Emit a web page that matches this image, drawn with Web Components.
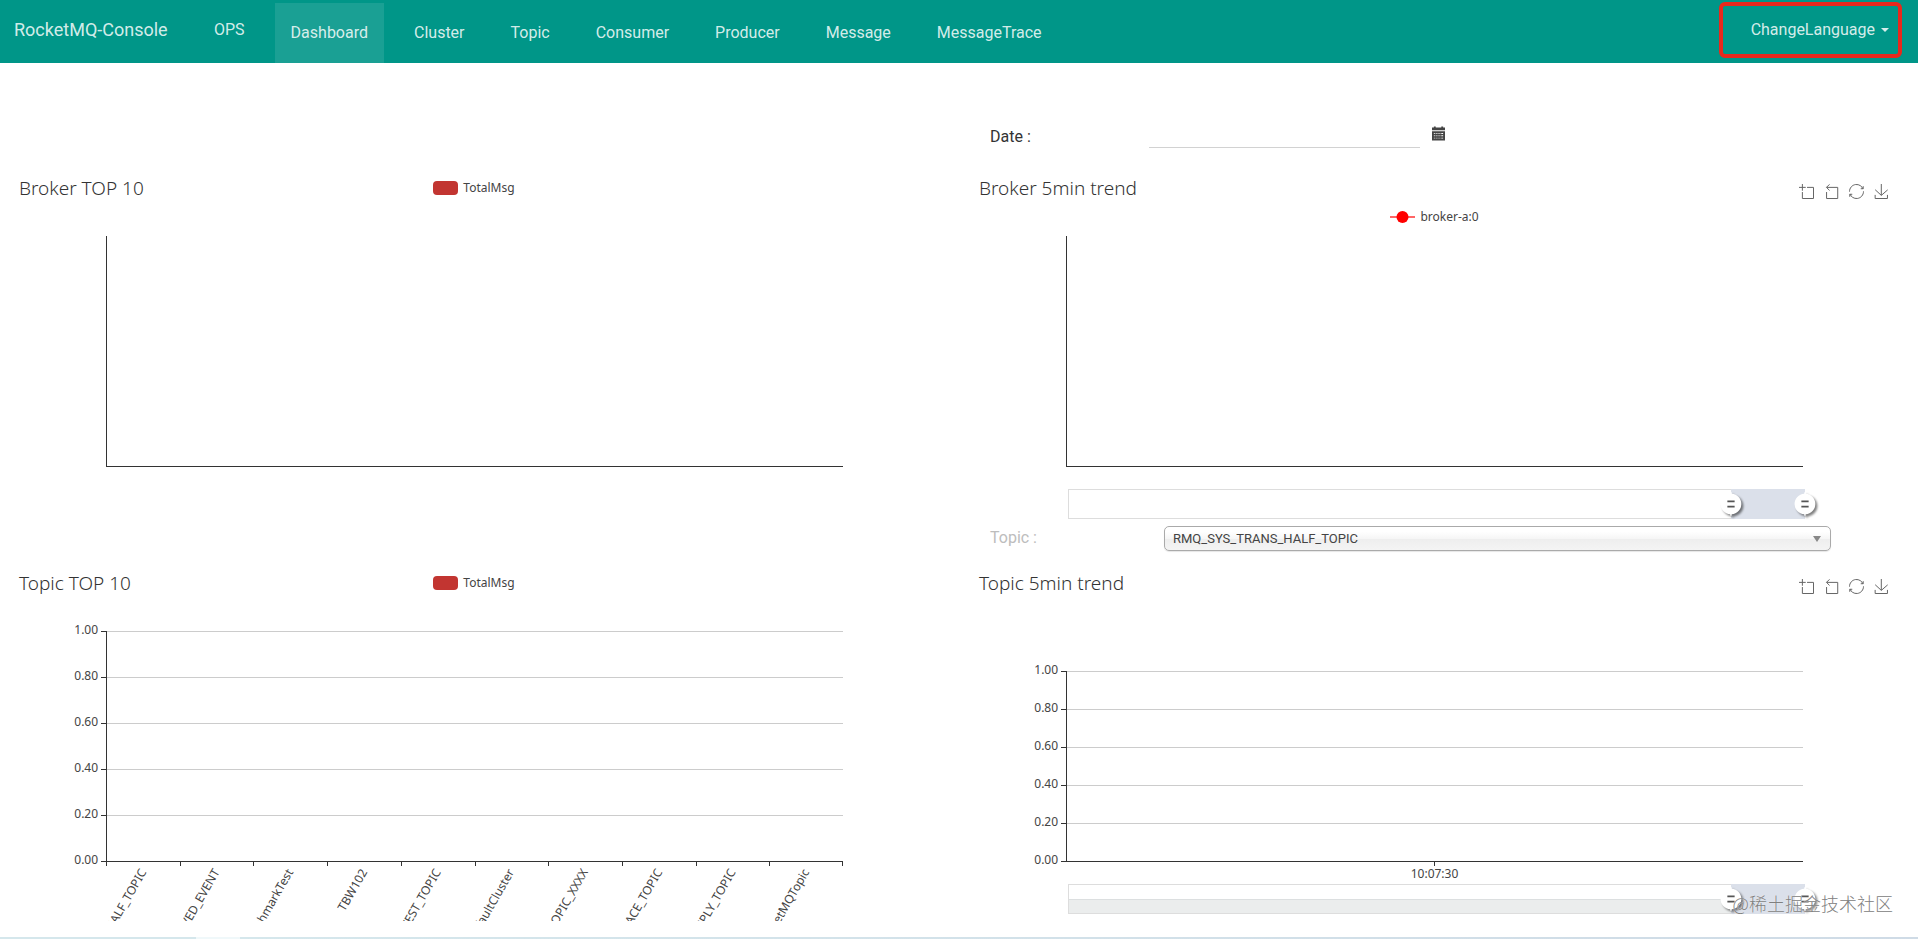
<!DOCTYPE html>
<html lang="en">
<head>
<meta charset="utf-8">
<title>RocketMQ-Console</title>
<style>
*{
    box-sizing: border-box;
}
body{
    margin: 0;
    min-height: 100vh;
    display: flex;
    flex-direction: column;
    position: relative;
    background: white;
    color: #333;
    font-family: Roboto, "Liberation Sans", sans-serif;
    font-size: 16px;
}
.board{
    display: grid;
    grid-template-columns: 1fr 1fr;
    column-gap: 2px;
}
.board > *{
    margin: 0 23px 0 14px;
}
.right{
    grid-column: 2;
}
.strip{
    margin-top: auto;
    height: 2px;
    background: linear-gradient(90deg, #d5e7ec 196px, #f0f8fa 196px 240px, #d5e7ec 240px, #cfdbe6);
}
.watermark{
    position: absolute;
    right: 25px;
    bottom: 23px;
    font: 300 18px/26px "Noto Sans CJK SC", sans-serif;
    color: #808080;
    text-shadow: 0 0 1px white;
    pointer-events: none;
}
</style>
</head>
<body>

<nav-bar brand="RocketMQ-Console">
    <nav-link slot="ops">OPS</nav-link>
    <nav-link active tab>Dashboard</nav-link>
    <nav-link tab>Cluster</nav-link>
    <nav-link tab>Topic</nav-link>
    <nav-link tab>Consumer</nav-link>
    <nav-link tab>Producer</nav-link>
    <nav-link tab>Message</nav-link>
    <nav-link tab>MessageTrace</nav-link>
</nav-bar>

<main class="board">
    <date-field class="right">Date :</date-field>

    <chart-panel heading="Broker TOP 10">
        <chart-legend slot="legend" type="bar">TotalMsg</chart-legend>
    </chart-panel>
    <chart-panel heading="Broker 5min trend" tools zoom>
        <chart-legend slot="sublegend" type="line">broker-a:0</chart-legend>
    </chart-panel>

    <topic-field class="right" options="RMQ_SYS_TRANS_HALF_TOPIC,OFFSET_MOVED_EVENT,BenchmarkTest,TBW102">Topic :</topic-field>

    <chart-panel heading="Topic TOP 10" values="1.00,0.80,0.60,0.40,0.20,0.00"
        categories="RMQ_SYS_TRANS_HALF_TOPIC,OFFSET_MOVED_EVENT,BenchmarkTest,TBW102,SELF_TEST_TOPIC,DefaultCluster,SCHEDULE_TOPIC_XXXX,RMQ_SYS_TRACE_TOPIC,DefaultCluster_REPLY_TOPIC,RocketMQTopic">
        <chart-legend slot="legend" type="bar">TotalMsg</chart-legend>
    </chart-panel>
    <chart-panel heading="Topic 5min trend" tools zoom shadow time="10:07:30" values="1.00,0.80,0.60,0.40,0.20,0.00"></chart-panel>
</main>

<div class="strip"></div>
<div class="watermark">@稀土掘金技术社区</div>

<script>
// attaches an open shadow root and fills it with the given markup
function shadowFrom(el, html){
    const template = document.createElement('template');
    template.innerHTML = html;
    const shadow = el.attachShadow({mode: 'open'});
    shadow.appendChild(template.content.cloneNode(true));
    return shadow;
}

function list(el, name){
    const value = el.getAttribute(name);
    return value ? value.split(',') : [];
}

class NavBar extends HTMLElement{
    connectedCallback(){
        shadowFrom(this, `
<style>
*{
    box-sizing: border-box;
}
:host{
    display: flex;
    align-items: flex-start;
    height: 63px;
    background: #009688;
    color: rgba(255, 255, 255, 0.84);
}
a{
    color: inherit;
    text-decoration: none;
}
.brand{
    width: 199px;
    padding-left: 14px;
    font-size: 18px;
    line-height: 59px;
}
nav{
    display: flex;
    gap: 14px;
    margin: 3px 0 0 15px;
}
button{
    display: flex;
    align-items: center;
    gap: 6px;
    height: 56px;
    margin: 2px 16px 0 auto;
    padding: 0 9px 1px 28px;
    border: 4px solid #e8281c;
    border-radius: 6px;
    background: none;
    color: inherit;
    font: inherit;
}
.caret{
    border: 4px solid transparent;
    border-top-color: currentColor;
    border-bottom: 0;
}
</style>
<a class="brand" href="#">${this.getAttribute('brand')}</a>
<slot name="ops"></slot>
<nav><slot></slot></nav>
<button type="button">ChangeLanguage <span class="caret"></span></button>
`);
    }
}

class NavLink extends HTMLElement{
    connectedCallback(){
        shadowFrom(this, `
<style>
:host{
    display: block;
}
a{
    display: block;
    padding: 0 15px;
    line-height: 59px;
    color: inherit;
    text-decoration: none;
}
:host([tab]) a{
    padding: 0 16px;
    line-height: 60px;
}
:host([active]) a{
    background: rgba(255, 255, 255, 0.1);
}
</style>
<a href="#"><slot></slot></a>
`);
    }
}

class DateField extends HTMLElement{
    connectedCallback(){
        shadowFrom(this, `
<style>
*{
    box-sizing: border-box;
}
:host{
    display: flex;
    align-items: flex-end;
    height: 85px;
    margin-bottom: 28px !important;
    padding-left: 16px;
}
label{
    width: 159px;
    line-height: 22px;
}
input{
    width: 271px;
    height: 36px;
    padding: 0;
    border: 0;
    border-bottom: 1px solid #d2d2d2;
    background: none;
    font: inherit;
}
button{
    margin: 0 0 7px 12px;
    padding: 0;
    border: 0;
    background: none;
    color: #444;
}
svg{
    display: block;
}
</style>
<label for="date"><slot></slot></label>
<input id="date" type="text">
<button type="button" aria-label="Pick a date">
    <svg width="13" height="15" viewBox="0 0 14 15" fill="currentColor">
        <path d="M0 1h2V0h2v1h6V0h2v1h2v3H0z"/>
        <path fill-rule="evenodd" d="M0 5h14v10H0zM2 7v1h1V7zM4 7v1h1V7zM6 7v1h1V7zM8 7v1h1V7zM10 7v1h2V7zM2 9.500v1h1v-1zM4 9.500v1h1v-1zM6 9.500v1h1v-1zM8 9.500v1h1v-1zM10 9.500v1h2v-1zM2 12v1h1v-1zM4 12v1h1v-1zM6 12v1h1v-1zM8 12v1h1v-1zM10 12v1h2v-1z"/>
    </svg>
</button>
`);
    }
}

class TopicField extends HTMLElement{
    connectedCallback(){
        shadowFrom(this, `
<style>
*{
    box-sizing: border-box;
}
:host{
    display: flex;
    height: 45px;
    padding: 0 64px 0 16px;
}
label{
    width: 174px;
    line-height: 23px;
    color: #bdbdbd;
}
.box{
    flex: 1;
    display: grid;
    height: 25px;
}
.box > *{
    grid-area: 1 / 1;
}
select{
    appearance: none;
    padding: 0 24px 0 8px;
    border: 1px solid #aaa;
    border-radius: 5px;
    background: linear-gradient(white 20%, #f6f6f6 50%, #eee 52%, #f4f4f4 100%);
    box-shadow: 0 1px 1px rgba(0, 0, 0, 0.1);
    color: #444;
    font: 13px/23px Roboto, sans-serif;
}
.arrow{
    place-self: center end;
    margin-right: 10px;
    border: 4px solid transparent;
    border-top: 6px solid #888;
    border-bottom: 0;
    pointer-events: none;
}
</style>
<label for="topic"><slot></slot></label>
<div class="box">
    <select id="topic">${list(this, 'options').map(o => `<option>${o}</option>`).join('')}</select>
    <span class="arrow"></span>
</div>
`);
    }
}

class ChartLegend extends HTMLElement{
    connectedCallback(){
        const bar = '<rect width="25" height="14" rx="4" fill="#c23531"/>';
        const line = '<path d="M0 7h25" stroke="#f66" stroke-width="2"/><circle cx="12.500" cy="7" r="6" fill="red"/>';
        shadowFrom(this, `
<style>
:host{
    display: flex;
    align-items: center;
    gap: 5px;
    font-size: 12px;
    line-height: 16px;
    color: #444;
}
</style>
<svg width="25" height="14">${this.getAttribute('type') === 'bar' ? bar : line}</svg>
<span><slot></slot></span>
`);
    }
}

const tool_icons = {
    'Zoom': 'M0,13.5h26.9 M13.5,26.9V0 M32.1,13.5H58V58H13.5V32.1',
    'Zoom reset': 'M22,1.4L9.9,13.5l12.3,12.3 M10.3,13.5H54.9v44.6H10.3v-26',
    'Restore': 'M47,18.9h9.8V8.7 M56.3,20.1C52.1,9,40.5,0.6,26.8,2.1C12.6,3.7,1.6,16.2,2.1,30.6 M13,41.1H3.1v10.2 M3.7,39.9c4.2,11.1,15.8,19.5,29.5,18c14.2-1.6,25.2-14.1,24.7-28.5',
    'Save': 'M4.7,22.9L29.3,45.5L54.7,23.4 M4.6,43.6V58H53.8V43.6 M29.2,45.1V0'
};

class ChartTools extends HTMLElement{
    connectedCallback(){
        const buttons = Object.entries(tool_icons).map(([name, path]) =>
            `<button type="button" aria-label="${name}"><svg width="15" height="15" viewBox="0 0 60 60"><path d="${path}"/></svg></button>`
        ).join('');
        shadowFrom(this, `
<style>
:host{
    display: flex;
    gap: 10px;
}
button{
    padding: 0;
    border: 0;
    background: none;
}
svg{
    display: block;
    overflow: visible;
    fill: none;
    stroke: #666;
    stroke-width: 4px;
}
</style>
${buttons}
`);
    }
}

// two range inputs on one track, the picked window is painted between the thumbs
class RangeZoom extends HTMLElement{
    connectedCallback(){
        this.shadow = shadowFrom(this, `
<style>
*{
    box-sizing: border-box;
}
:host{
    display: grid;
    height: 30px;
    --start: 90%;
    --end: 100%;
}
.track, .picked, input{
    grid-area: 1 / 1;
}
.track{
    border: 1px solid #ddd;
}
:host([shadow]) .track{
    background: linear-gradient(transparent 14px, #dcdfe0 14px 15px, #ebeded 15px);
}
.picked{
    margin-left: var(--start);
    margin-right: calc(100% - var(--end));
    background: #dbe0ea;
}
input{
    appearance: none;
    margin: 0 -11px;
    background: none;
    pointer-events: none;
}
input::-webkit-slider-thumb{
    appearance: none;
    width: 22px;
    height: 24px;
    border-radius: 50%;
    background: url("data:image/svg+xml,%3Csvg xmlns='http://www.w3.org/2000/svg' viewBox='0 10.600 20 21.400'%3E%3Cpath fill='white' d='M10.700,11.900v-1.300H9.300v1.300c-4.900,0.300-8.800,4.400-8.800,9.400c0,5,3.900,9.100,8.800,9.400v1.300h1.300v-1.300c4.900-0.300,8.800-4.400,8.800-9.400C19.500,16.300,15.600,12.200,10.700,11.900z'/%3E%3Cpath fill='%23555' d='M13.300,24.400H6.700V23h6.600V24.400z M13.300,19.600H6.700v-1.400h6.600V19.600z'/%3E%3C/svg%3E") center / 100% 100%;
    filter: drop-shadow(2px 2px 1px rgba(0, 0, 0, 0.5));
    pointer-events: auto;
}
</style>
<div class="track"></div>
<div class="picked"></div>
<input class="start" type="range" value="90" aria-label="Window start">
<input class="end" type="range" value="100" aria-label="Window end">
`);
        for(const name of ['start', 'end']){
            this.shadow.querySelector('.' + name).addEventListener('input', (e)=>{
                this.style.setProperty('--' + name, e.target.value + '%');
            });
        }
    }
}

class ChartPanel extends HTMLElement{
    connectedCallback(){
        const values = list(this, 'values');
        const categories = list(this, 'categories');
        const time = this.getAttribute('time');
        shadowFrom(this, `
<style>
*{
    box-sizing: border-box;
}
:host{
    display: flex;
    flex-direction: column;
    height: 350px;
    overflow: hidden;
    font-family: "Noto Sans", "Liberation Sans", sans-serif;
}
header{
    height: 60px;
}
:host([time]) header{
    height: 100px;
}
.bar{
    display: grid;
    grid-template-columns: 1fr auto 1fr;
    height: 24px;
    padding: 0 6px 0 5px;
}
h2{
    margin: 0;
    font-size: 19px;
    font-weight: 300;
    line-height: 24px;
}
chart-tools{
    grid-column: 3;
    justify-self: end;
    margin-top: 6px;
}
.sub{
    display: flex;
    justify-content: center;
    height: 34px;
}
.plot{
    flex: 1;
    display: grid;
    grid-template-columns: 10% 1fr 10%;
}
.ticks, .lines{
    display: flex;
    flex-direction: column;
    justify-content: space-between;
}
.tick{
    display: flex;
    align-items: center;
    justify-content: flex-end;
    gap: 3px;
    height: 1px;
    color: #444;
    font-size: 12px;
    line-height: 16px;
}
.tick span{
    padding-bottom: 3px;
}
.tick i{
    width: 5px;
    height: 1px;
    background: #333;
}
.lines{
    grid-column: 2;
    border-left: 1px solid #333;
}
.lines div{
    height: 1px;
    background: #ccc;
}
.lines div:last-child{
    background: #333;
}
.lines.bare{
    justify-content: flex-end;
}
footer{
    height: 59px;
    margin: 0 10%;
    color: #444;
    font-size: 12px;
}
.bands{
    display: flex;
    height: 59px;
    background: linear-gradient(#333, #333) 100% 0 / 1px 4px no-repeat;
}
.band{
    flex: 1;
    display: flex;
    justify-content: flex-end;
    min-width: 0;
    padding-right: 5%;
    background: linear-gradient(#333, #333) 0 0 / 1px 4px no-repeat;
    line-height: 16px;
    white-space: nowrap;
}
.band span{
    height: 16px;
    transform: rotate(-60deg);
    transform-origin: 100% 50%;
}
.time{
    height: 22px;
    padding-top: 4px;
    background: linear-gradient(#333, #333) 50% 0 / 1px 4px no-repeat;
    line-height: 16px;
    text-align: center;
}
.time:empty{
    background: none;
}
range-zoom{
    margin: 0 -2px 0 2px;
}
</style>
<header>
    <div class="bar">
        <h2>${this.getAttribute('heading')}</h2>
        <slot name="legend"></slot>
        ${this.hasAttribute('tools') ? '<chart-tools></chart-tools>' : ''}
    </div>
    <div class="sub"><slot name="sublegend"></slot></div>
</header>
<div class="plot">
    <div class="ticks">${values.map(v => `<div class="tick"><span>${v}</span><i></i></div>`).join('')}</div>
    <div class="lines ${values.length ? '' : 'bare'}">${(values.length ? values : [0]).map(() => '<div></div>').join('')}</div>
</div>
<footer>
    ${categories.length ? `<div class="bands">${categories.map(c => `<div class="band"><span>${c}</span></div>`).join('')}</div>` : ''}
    ${this.hasAttribute('zoom') ? `<div class="time">${time || ''}</div><range-zoom ${this.hasAttribute('shadow') ? 'shadow' : ''}></range-zoom>` : ''}
</footer>
`);
    }
}

window.customElements.define('nav-bar', NavBar);
window.customElements.define('nav-link', NavLink);
window.customElements.define('date-field', DateField);
window.customElements.define('topic-field', TopicField);
window.customElements.define('chart-legend', ChartLegend);
window.customElements.define('chart-tools', ChartTools);
window.customElements.define('range-zoom', RangeZoom);
window.customElements.define('chart-panel', ChartPanel);
</script>
</body>
</html>
